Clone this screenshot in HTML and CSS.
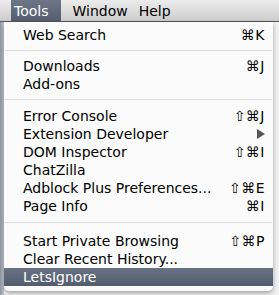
FILE: index.html
```html
<!DOCTYPE html>
<html>
<head>
<meta charset="utf-8">
<link rel="stylesheet" href="styles.css">
</head>
<body>
<div class="screen">
  <div class="menubar">
    <span class="mb-item active">Tools</span>
    <span class="mb-item window">Window</span>
    <span class="mb-item help">Help</span>
  </div>
  <div class="menu">
    <div class="row"><span>Web Search</span><span class="key">⌘K</span></div>
    <div class="sep sep1"></div>
    <div class="row"><span>Downloads</span><span class="key">⌘J</span></div>
    <div class="row"><span>Add-ons</span></div>
    <div class="sep sep2"></div>
    <div class="row"><span>Error Console</span><span class="key">⇧⌘J</span></div>
    <div class="row"><span>Extension Developer</span><span class="arrow"></span></div>
    <div class="row"><span>DOM Inspector</span><span class="key">⇧⌘I</span></div>
    <div class="row"><span>ChatZilla</span></div>
    <div class="row"><span>Adblock Plus Preferences...</span><span class="key">⇧⌘E</span></div>
    <div class="row"><span>Page Info</span><span class="key">⌘I</span></div>
    <div class="sep sep3"></div>
    <div class="row"><span>Start Private Browsing</span><span class="key">⇧⌘P</span></div>
    <div class="row"><span>Clear Recent History...</span></div>
    <div class="row hl"><span>LetsIgnore</span></div>
  </div>
</div>
</body>
</html>
```
FILE: styles.css
```css
html, body {
  margin: 0;
  padding: 0;
  background: #e9ecef;
}
.screen {
  width: 279px;
  height: 295px;
  overflow: hidden;
  position: relative;
  font-family: "DejaVu Sans", "Lucida Grande", sans-serif;
  font-size: 14px;
  background: linear-gradient(to right, #8e96a2 0, #c9ced6 4px, #f2f2f2 4px);
}
.menubar {
  height: 22px;
  display: flex;
  align-items: stretch;
  padding-left: 11px;
  background: linear-gradient(#ececec, #cdcdcd);
  border-bottom: 1px solid #555;
  box-sizing: border-box;
}
.mb-item {
  display: flex;
  align-items: center;
  padding: 0 0 0 3px;
  color: #000;
}
.mb-item.active {
  background: linear-gradient(#6d7687, #555e6f);
  color: #fff;
  padding-right: 12px;
}
.mb-item.window {
  margin-left: 9px;
}
.mb-item.help {
  margin-left: 8px;
}
.menu {
  margin-left: 4px;
  width: 269px;
  background: #fbfbfb;
  padding-top: 4px;
  padding-bottom: 5px;
  box-shadow: 0 2px 5px rgba(0,0,0,0.35);
  border-radius: 0 0 5px 5px;
  box-sizing: border-box;
}
.row {
  height: 18px;
  display: flex;
  align-items: center;
  justify-content: space-between;
  padding: 0 8px 0 19px;
  color: #000;
}
.row.hl {
  background: linear-gradient(#6a7384, #535c6c);
  color: #fff;
}
.key {
  letter-spacing: 0.5px;
}
.arrow {
  width: 0;
  height: 0;
  border-top: 5px solid transparent;
  border-bottom: 5px solid transparent;
  border-left: 8px solid #555;
}
.sep {
  height: 1px;
  background: #dcdcdc;
  margin: 6px 1px;
}
.sep2 {
  margin-bottom: 7px;
}
.sep3 {
  margin: 7px 1px 9px;
}
```
